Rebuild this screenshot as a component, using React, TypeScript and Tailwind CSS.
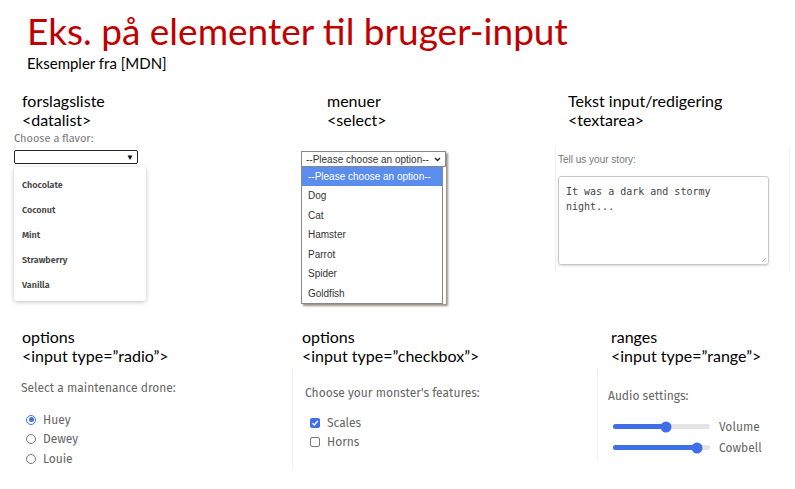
import React from 'react';

const slide = { fontFamily: 'Lato, "Open Sans", sans-serif' };
const mdn = { fontFamily: '"Fira Sans", "Open Sans", "Noto Sans", sans-serif' };
const arial = { fontFamily: '"Liberation Sans", Arial, sans-serif' };
const mono = { fontFamily: '"DejaVu Sans Mono", "Liberation Mono", monospace' };

const Heading: React.FC<{ top: string; bottom: string }> = ({ top, bottom }) => (
  <div className="text-[16px] leading-[19px] text-black" style={slide}>
    <div>{top}</div>
    <div>{bottom}</div>
  </div>
);

const flavors = ['Chocolate', 'Coconut', 'Mint', 'Strawberry', 'Vanilla'];
const pets = ['Dog', 'Cat', 'Hamster', 'Parrot', 'Spider', 'Goldfish'];

const Slider: React.FC<{ value: number; label: string }> = ({ value, label }) => (
  <div className="flex items-center h-[21px]">
    <div className="relative w-[97px] h-[5px] rounded-full bg-[#e4e4e4] ml-[5px]">
      <div className="absolute left-0 top-0 h-[5px] rounded-full bg-[#3f6fe8]" style={{ width: `${value}%` }} />
      <div
        className="absolute top-1/2 -translate-y-1/2 -translate-x-1/2 w-[11px] h-[11px] rounded-full bg-[#3f6fe8]"
        style={{ left: `${value}%` }}
      />
    </div>
    <span className="ml-[9px] text-[12px] text-[#666]" style={mdn}>{label}</span>
  </div>
);

export default function App() {
  return (
    <div className="w-[795px] h-[489px] bg-white overflow-hidden">
      {/* title */}
      <div className="pl-[27px] pt-[9px]" style={slide}>
        <h1 className="text-[37px] leading-[44px] text-[#c00000]">Eks. på elementer til bruger-input</h1>
        <p className="text-[15px] leading-[18px] text-black mt-[1px]">Eksempler fra [MDN]</p>
      </div>

      {/* top row */}
      <div className="flex mt-[19px]">
        {/* datalist */}
        <div className="w-[301px] pl-[14px]">
          <div className="pl-[8px]">
            <Heading top="forslagsliste" bottom="<datalist>" />
          </div>
          <div className="mt-[3px] text-[11px] leading-[13px] text-[#777]" style={mdn}>Choose a flavor:</div>
          <div className="mt-[5px] w-[124px] h-[14px] border-[1.5px] border-[#222] rounded-[2px] flex items-center justify-end pr-[3px]">
            <span className="text-[8px] leading-none text-black">▼</span>
          </div>
          <div className="mt-[3px] w-[132px] h-[134px] bg-white rounded-[3px] shadow-[0_1px_4px_rgba(0,0,0,0.25)] pt-[12px] pl-[8px]">
            {flavors.map(f => (
              <div key={f} className="h-[25px] text-[9px] leading-[12px] font-semibold text-[#444]" style={mdn}>{f}</div>
            ))}
          </div>
        </div>

        {/* select */}
        <div className="w-[254px]">
          <div className="pl-[26px]">
            <Heading top="menuer" bottom="<select>" />
          </div>
          <div className="mt-[22px] w-[145px] shadow-[2px_2px_2px_rgba(90,70,50,0.6)]" style={arial}>
            <div className="h-[16px] border border-[#888] flex items-center justify-between px-[4px] text-[10px] text-[#333] bg-white">
              <span>--Please choose an option--</span>
              <svg width="7" height="5" viewBox="0 0 7 5"><path d="M1 1l2.5 2.5L6 1" stroke="#222" strokeWidth="1.4" fill="none" /></svg>
            </div>
            <div className="w-[142px] border border-[#888] border-t-0 bg-white text-[10px] text-[#333]">
              <div className="h-[19px] bg-[#5b8dee] text-white flex items-center pl-[6px]">--Please choose an option--</div>
              {pets.map(p => (
                <div key={p} className="h-[19.5px] flex items-center pl-[6px]">{p}</div>
              ))}
            </div>
          </div>
        </div>

        {/* textarea */}
        <div className="flex-1 pl-[13px]">
          <Heading top="Tekst input/redigering" bottom="<textarea>" />
          <div className="mt-[18px] -ml-[13px] w-[235px] h-[125px] border-l border-r border-[#f0f0f0] pl-[2px] pt-[6px]">
            <div className="text-[10px] leading-[13px] text-[#777]" style={arial}>Tell us your story:</div>
            <div className="mt-[10px] w-[211px] h-[89px] border border-[#c8c8c8] rounded-[3px] shadow-[0_1px_2px_rgba(0,0,0,0.15)] relative px-[7px] pt-[7px] text-[10px] leading-[15px] text-[#444]" style={mono}>
              It was a dark and stormy night...
              <svg className="absolute right-[1px] bottom-[1px]" width="6" height="6" viewBox="0 0 6 6"><path d="M5 1L1 5M5 3.5L3.5 5" stroke="#999" strokeWidth="0.8" /></svg>
            </div>
          </div>
        </div>
      </div>

      {/* bottom row */}
      <div className="flex mt-[23px]">
        {/* radio */}
        <div className="w-[292px] pl-[21px]">
          <div className="pl-[1px]">
            <Heading top="options" bottom={'<input type=”radio”>'} />
          </div>
          <div className="mt-[16px] text-[12px] leading-[15px] text-[#666]" style={mdn}>Select a maintenance drone:</div>
          <div className="mt-[14px] pl-[5px]">
            {['Huey', 'Dewey', 'Louie'].map((n, i) => (
              <div key={n} className="h-[19.5px] flex items-center text-[12px] text-[#666]" style={mdn}>
                {i === 0 ? (
                  <span className="w-[10px] h-[10px] rounded-full border-[1.5px] border-[#3f6fe8] flex items-center justify-center">
                    <span className="w-[5px] h-[5px] rounded-full bg-[#3f6fe8]" />
                  </span>
                ) : (
                  <span className="w-[10px] h-[10px] rounded-full border border-[#777]" />
                )}
                <span className="ml-[7px]">{n}</span>
              </div>
            ))}
          </div>
        </div>

        {/* checkbox */}
        <div className="w-[305px] pl-[10px]">
          <Heading top="options" bottom={'<input type=”checkbox”>'} />
          <div className="mt-[4px] -ml-[10px] border-l border-[#f0f0f0] h-[100px] pl-[12px] pt-[17px]">
            <div className="text-[12px] leading-[15px] text-[#666]" style={mdn}>Choose your monster's features:</div>
            <div className="mt-[12px] pl-[5px]">
              {['Scales', 'Horns'].map((n, i) => (
                <div key={n} className="h-[19.5px] flex items-center text-[12px] text-[#666]" style={mdn}>
                  {i === 0 ? (
                    <span className="w-[10px] h-[10px] rounded-[2px] bg-[#3f6fe8] flex items-center justify-center">
                      <svg width="8" height="8" viewBox="0 0 8 8"><path d="M1.5 4.2l1.8 1.8L6.7 2" stroke="#fff" strokeWidth="1.4" fill="none" /></svg>
                    </span>
                  ) : (
                    <span className="w-[10px] h-[10px] rounded-[2px] border border-[#777]" />
                  )}
                  <span className="ml-[7px]">{n}</span>
                </div>
              ))}
            </div>
          </div>
        </div>

        {/* range */}
        <div className="flex-1 pl-[14px]">
          <Heading top="ranges" bottom={'<input type=”range”>'} />
          <div className="mt-[4px] -ml-[14px] border-l border-[#f0f0f0] h-[92px] pl-[10px] pt-[20px]">
            <div className="text-[12px] leading-[15px] text-[#666]" style={mdn}>Audio settings:</div>
            <div className="mt-[12px]">
              <Slider value={55} label="Volume" />
              <Slider value={87} label="Cowbell" />
            </div>
          </div>
        </div>
      </div>
    </div>
  );
}
